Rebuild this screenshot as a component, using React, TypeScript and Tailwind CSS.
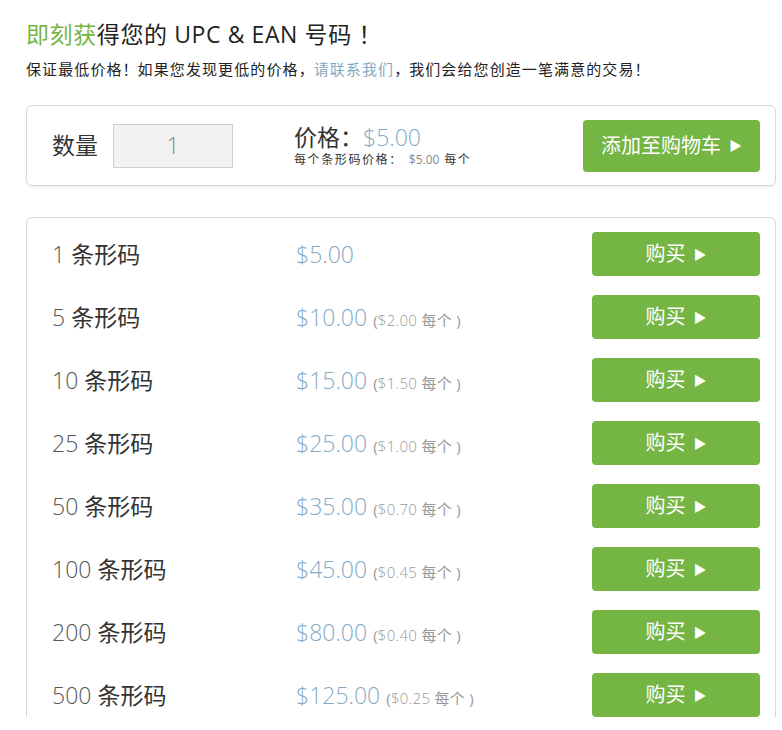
const tiers = [
  { qty: '1', price: '$5.00', each: '' },
  { qty: '5', price: '$10.00', each: '$2.00' },
  { qty: '10', price: '$15.00', each: '$1.50' },
  { qty: '25', price: '$25.00', each: '$1.00' },
  { qty: '50', price: '$35.00', each: '$0.70' },
  { qty: '100', price: '$45.00', each: '$0.45' },
  { qty: '200', price: '$80.00', each: '$0.40' },
  { qty: '500', price: '$125.00', each: '$0.25' },
]

const Arrow = () => <span className="ml-2 text-[13px] leading-none">▶</span>

// full-width punctuation box, like the YaHei rendering
const Bang = () => <span className="inline-block w-[1em] text-center">！</span>
const Comma = () => <span className="inline-block w-[1em] text-left">，</span>

export default function App() {
  return (
    <div className="min-h-[730px] bg-white px-[26px] pt-[18px] font-['Open_Sans','Noto_Sans_CJK_SC',sans-serif] text-[#333]">
      <h1 className="text-[23px] leading-[32px] tracking-[0.6px] text-[#222]">
        <span className="text-[#75b543]">即刻获</span>得您的 UPC &amp; EAN 号码 <Bang />
      </h1>
      <p className="mt-[4px] text-[15px] leading-[30px] tracking-[1.1px] text-[#222]">
        保证最低价格<Bang />如果您发现更低的价格<Comma />
        <span className="text-[#7fa9c3]">请联系我们</span>
        <Comma />我们会给您创造一笔满意的交易<Bang />
      </p>

      <div className="mt-[21px] flex h-[81px] w-[750px] items-center rounded-[6px] border border-[#d8d8d8] pl-[25px] pr-[15px] shadow-[0_2px_3px_rgba(0,0,0,0.06)]">
        <span className="text-[23px] text-[#333]">数量</span>
        <div className="ml-[15px] flex h-[44px] w-[120px] items-center justify-center border border-[#cfcfcf] bg-[#f2f2f2] text-[23px] font-light text-[#888]">
          1
        </div>
        <div className="ml-[61px] flex flex-col">
          <div className="text-[23px] leading-[28px] text-[#333]">
            价格：<span className="font-light text-[#86aac4]">$5.00</span>
          </div>
          <div className="text-[12px] leading-[18px] tracking-[1.6px] text-[#333]">
            每个条形码价格：<span className="ml-[6px] tracking-normal text-[#888]">$5.00</span> 每个
          </div>
        </div>
        <button className="ml-auto flex h-[52px] w-[177px] items-center justify-center rounded-[4px] bg-[#75b543] text-[20px] text-white">
          添加至购物车
          <Arrow />
        </button>
      </div>

      <div className="mt-[31px] w-[750px] rounded-t-[6px] border border-b-0 border-[#d8d8d8] pl-[25px] pr-[15px] pt-[14px]">
        <div className="flex flex-col gap-[19px]">
          {tiers.map(t => (
            <div key={t.qty} className="flex h-[44px] items-center">
              <div className="w-[244px] text-[23px]">
                <span className="font-light text-[#555]">{t.qty}</span>{' '}
                <span className="text-[#333]">条形码</span>
              </div>
              <div className="flex items-baseline">
                <span className="text-[23px] font-light text-[#86aac4]">{t.price}</span>
                {t.each && (
                  <span className="ml-[6px] text-[15px] tracking-[0.3px] text-[#999]">
                    (<span className="font-light">{t.each}</span> 每个 )
                  </span>
                )}
              </div>
              <button className="ml-auto flex h-[44px] w-[168px] items-center justify-center rounded-[4px] bg-[#75b543] text-[20px] text-white">
                购买
                <Arrow />
              </button>
            </div>
          ))}
        </div>
      </div>
    </div>
  )
}
